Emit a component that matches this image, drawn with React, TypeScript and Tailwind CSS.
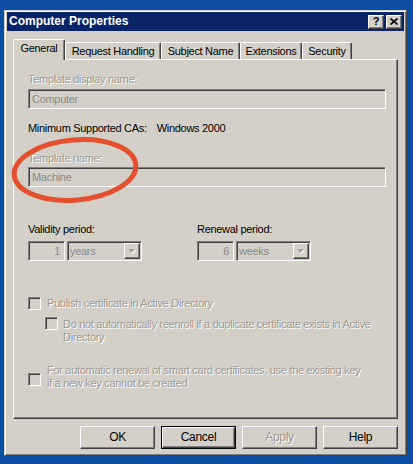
import React from "react";

const raised = "border border-t-white border-l-white border-r-[#404040] border-b-[#404040] shadow-[inset_-1px_-1px_0_#808080]";
const sunken = "border border-t-[#808080] border-l-[#808080] border-r-white border-b-white shadow-[inset_1px_1px_0_#404040]";
const grayText = "text-[#9c9a95] [text-shadow:1px_1px_0_#ffffff]";

function Field({ value, className = "" }: { value: string; className?: string }) {
	return (
		<div className={`${sunken} h-[20px] flex items-center pl-[3px] text-[#8a8a8a] ${className}`}>
			{value}
		</div>
	);
}

function Dropdown({ value }: { value: string }) {
	return (
		<div className={`${sunken} h-[20px] w-[75px] flex items-center pl-[2px] pr-[1px] text-[#8a8a8a]`}>
			<span className="flex-1">{value}</span>
			<div className={`${raised} bg-[#d4d0c8] w-[16px] h-[16px] flex items-center justify-center`}>
				<svg width="8" height="5" viewBox="0 0 8 5">
					<path d="M1 1h7L4.5 5z" fill="#ffffff" />
					<path d="M0 0h7L3.5 4z" fill="#a19f9a" />
				</svg>
			</div>
		</div>
	);
}

function Check({ className = "" }: { className?: string }) {
	return <div className={`${sunken} w-[13px] h-[13px] shrink-0 bg-[#d4d0c8] ${className}`} />;
}

function Tab({ label, width, active }: { label: string; width: string; active?: boolean }) {
	return (
		<div
			className={`${width} flex items-center justify-center rounded-t-[2px] border-t border-l border-t-white border-l-white border-r border-r-[#404040] shadow-[inset_-1px_0_0_#808080] bg-[#d4d0c8] ${
				active ? "h-[21px] relative z-10 -mb-[1px] pb-[3px]" : "h-[17px] pt-[1px]"
			}`}
		>
			{label}
		</div>
	);
}

function Button({ label, disabled, focused }: { label: string; disabled?: boolean; focused?: boolean }) {
	return (
		<div className={`w-[75px] h-[23px] ${focused ? "border border-black" : ""}`}>
			<div className={`${raised} h-full flex items-center justify-center text-[12px] ${disabled ? grayText : "text-black"}`}>
				{label}
			</div>
		</div>
	);
}

export default function App() {
	return (
		<div className="relative w-[413px] h-[464px] bg-[#0c4ea2] pt-[10px] pl-[4px] font-['Liberation_Sans',Arial,sans-serif] text-[11px] tracking-[-0.3px] leading-[13px] text-black">
			<div className="w-[403px] h-[446px] bg-[#d4d0c8] border border-t-[#d4d0c8] border-l-[#d4d0c8] border-r-[#404040] border-b-[#404040] shadow-[inset_1px_1px_0_#ffffff,inset_-1px_-1px_0_#808080] px-[2px] pt-[1px] flex flex-col">
				{/* title bar */}
				<div className="h-[19px] bg-[#0a246a] flex items-center pl-[2px] pr-[2px]">
					<span className="flex-1 text-white font-bold text-[12px] tracking-normal">Computer Properties</span>
					<div className={`${raised} bg-[#d4d0c8] w-[16px] h-[14px] flex items-center justify-center font-bold text-[11px] leading-none tracking-normal`}>
						?
					</div>
					<div className={`${raised} bg-[#d4d0c8] w-[16px] h-[14px] ml-[2px] flex items-center justify-center`}>
						<svg width="8" height="7" viewBox="0 0 8 7">
							<path d="M0.5 0.5L7.5 6.5M7.5 0.5L0.5 6.5" stroke="#000" strokeWidth="1.6" />
						</svg>
					</div>
				</div>

				<div className="px-[6px] pt-[7px] flex flex-col">
					{/* tabs */}
					<div className="flex items-end h-[21px]">
						<Tab label="General" width="w-[52px]" active />
						<Tab label="Request Handling" width="w-[96px]" />
						<Tab label="Subject Name" width="w-[79px]" />
						<Tab label="Extensions" width="w-[62px]" />
						<Tab label="Security" width="w-[50px]" />
					</div>

					{/* panel */}
					<div className={`h-[360px] border border-t-white border-l-white border-r-[#404040] border-b-[#404040] shadow-[inset_-1px_-1px_0_#808080] pl-[14px] pr-[11px] flex flex-col`}>
						<div className={`mt-[13px] ${grayText}`}>Template display name:</div>
						<Field value="Computer" className="mt-[3px]" />
						<div className="mt-[13px]">
							Minimum Supported CAs:<span className="ml-[10px]">Windows 2000</span>
						</div>
						<div className={`mt-[17px] ${grayText}`}>Template name:</div>
						<Field value="Machine" className="mt-[2px]" />

						<div className="mt-[36px] flex">
							<div className="w-[169px]">
								<div>Validity period:</div>
								<div className="mt-[5px] flex gap-[2px]">
									<div className={`${sunken} h-[20px] w-[37px] flex items-center justify-end pr-[4px] text-[#8a8a8a]`}>1</div>
									<Dropdown value="years" />
								</div>
							</div>
							<div>
								<div>Renewal period:</div>
								<div className="mt-[5px] flex gap-[2px]">
									<div className={`${sunken} h-[20px] w-[37px] flex items-center justify-end pr-[4px] text-[#8a8a8a]`}>6</div>
									<Dropdown value="weeks" />
								</div>
							</div>
						</div>

						<div className="mt-[36px] flex items-center gap-[6px]">
							<Check />
							<span className={grayText}>Publish certificate in Active Directory</span>
						</div>
						<div className="mt-[8px] ml-[17px] flex items-start gap-[5px]">
							<Check className="-mt-[1px]" />
							<span className={grayText}>
								Do not automatically reenroll if a duplicate certificate exists in Active
								<br />
								Directory
							</span>
						</div>
						<div className="mt-[20px] flex items-center gap-[6px]">
							<Check className="mt-[5px]" />
							<span className={grayText}>
								For automatic renewal of smart card certificates, use the existing key
								<br />
								if a new key cannot be created
							</span>
						</div>
					</div>

					{/* buttons */}
					<div className="mt-[7px] flex justify-end gap-[6px]">
						<Button label="OK" />
						<Button label="Cancel" focused />
						<Button label="Apply" disabled />
						<Button label="Help" />
					</div>
				</div>
			</div>

			{/* red annotation circle */}
			<svg className="absolute inset-0 pointer-events-none" width="413" height="464">
				<ellipse cx="75" cy="170" rx="61" ry="30" transform="rotate(-5 75 170)" fill="none" stroke="#e4502e" strokeWidth="5" />
			</svg>
		</div>
	);
}
